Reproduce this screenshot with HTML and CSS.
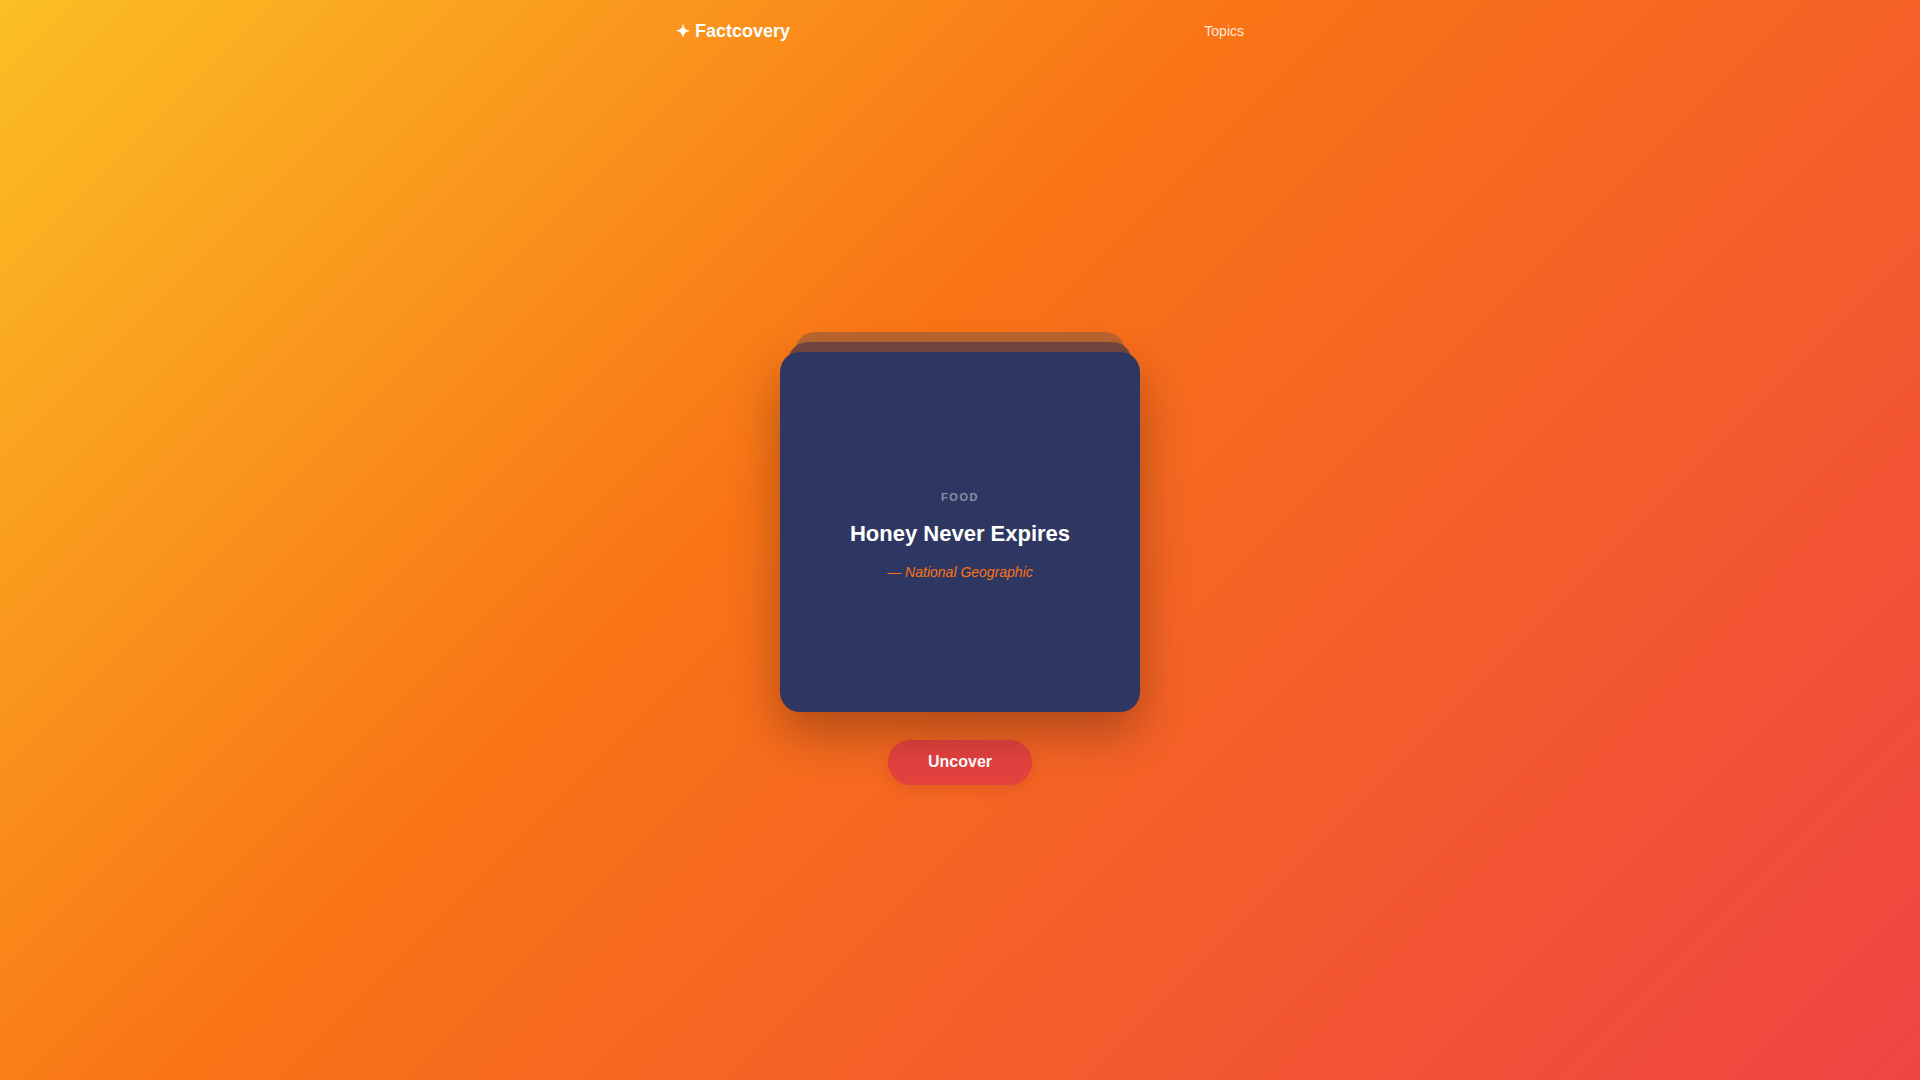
FILE: index.html
```html
<!DOCTYPE html>
<html lang="en">
<head>
<meta charset="utf-8">
<title>Factcovery</title>
<link rel="stylesheet" href="styles.css">
</head>
<body>
<header class="header">
  <div class="header-inner">
    <div class="logo"><span class="logo-star">✦</span> Factcovery</div>
    <nav class="nav"><a class="nav-link" href="#">Topics</a></nav>
  </div>
</header>
<main class="main">
  <div class="stack">
    <div class="layer layer-back"></div>
    <div class="layer layer-mid"></div>
    <div class="card">
      <div class="card-category">FOOD</div>
      <h1 class="card-title">Honey Never Expires</h1>
      <div class="card-source">— National Geographic</div>
    </div>
  </div>
  <button class="btn">Uncover</button>
</main>
</body>
</html>
```

FILE: styles.css
```css
* { box-sizing: border-box; }
html, body { margin: 0; padding: 0; }
body {
  width: 100%;
  min-height: 100vh;
  font-family: "Liberation Sans", Arial, sans-serif;
  color: #fff;
  background: linear-gradient(135deg, #fbbf24 0%, #f97316 42%, #ef4444 100%);
  overflow: hidden;
}
.header {
  height: 60px;
  padding-top: 2px;
}
.header-inner {
  max-width: 600px;
  height: 100%;
  margin: 0 auto;
  padding: 0 16px;
  display: flex;
  align-items: center;
  justify-content: space-between;
}
.logo {
  font-size: 18px;
  font-weight: 700;
  color: #fff;
}
.logo-star {
  font-size: 17px;
}
.nav-link {
  font-size: 14px;
  color: rgba(255, 255, 255, 0.85);
  text-decoration: none;
}
.main {
  height: 1020px;
  display: flex;
  flex-direction: column;
  align-items: center;
  justify-content: center;
  gap: 28px;
  padding-bottom: 4px;
}
.stack {
  position: relative;
  width: 360px;
  height: 360px;
}
.layer {
  position: absolute;
  bottom: 0;
  border-radius: 20px;
}
.layer-back {
  top: -20px;
  left: 15px;
  right: 15px;
  background: #b9652f;
}
.layer-mid {
  top: -10px;
  left: 8px;
  right: 8px;
  background: #754841;
}
.card {
  position: relative;
  width: 360px;
  height: 360px;
  border-radius: 20px;
  background: #2e3761;
  box-shadow: 0 20px 50px rgba(0, 0, 0, 0.3);
  display: flex;
  flex-direction: column;
  align-items: center;
  justify-content: center;
  text-align: center;
  padding: 8px 24px 0;
}
.card-category {
  font-size: 11px;
  font-weight: 700;
  letter-spacing: 1.5px;
  color: rgba(255, 255, 255, 0.45);
  margin-bottom: 18px;
}
.card-title {
  margin: 0 0 17px;
  font-size: 22px;
  font-weight: 700;
  line-height: 1.2;
  color: #fff;
}
.card-source {
  font-size: 14px;
  font-style: italic;
  color: #f97316;
}
.btn {
  width: 144px;
  height: 45px;
  border: none;
  border-radius: 999px;
  background: #e5423f;
  color: #fff;
  font-family: "Liberation Sans", Arial, sans-serif;
  font-size: 16px;
  font-weight: 700;
  cursor: pointer;
  box-shadow: 0 6px 16px rgba(0, 0, 0, 0.08);
}
```
